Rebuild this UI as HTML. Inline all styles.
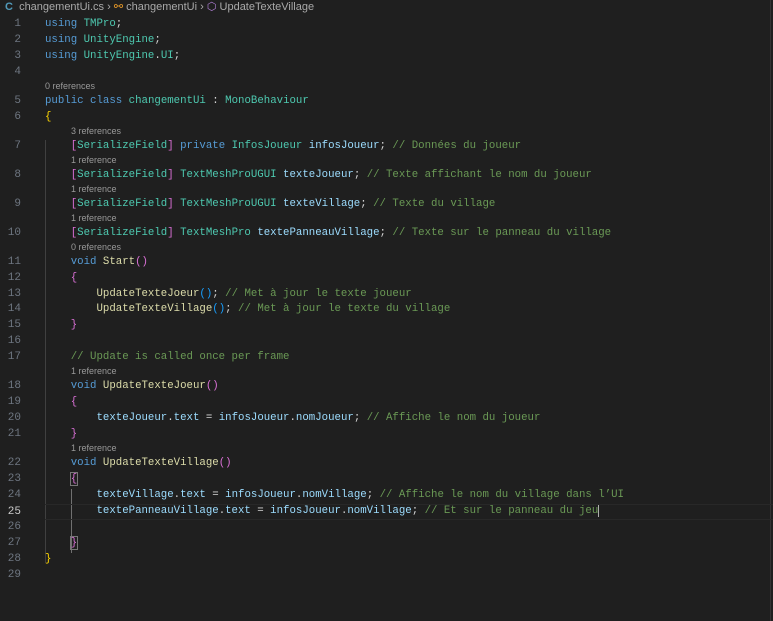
<!DOCTYPE html>
<html><head><meta charset="utf-8"><style>
body{margin:0;background:#1f1f1f;width:773px;height:621px;overflow:hidden;position:relative;font-family:"Liberation Mono",monospace;}
.bc{position:absolute;top:0;left:0;height:14px;font:11px "Liberation Sans",sans-serif;color:#a9a9a9;white-space:pre;line-height:14px;}
.bc span{display:inline-block;vertical-align:top}
#ed{position:absolute;top:17px;left:0;right:0}
.l{position:relative;height:15.95px;line-height:15.95px;font-size:10.73px;white-space:pre;color:#d4d4d4}
.l .n{position:absolute;left:0;width:21px;text-align:right;color:#6e7681;font-size:11px}
.l .c{position:absolute;left:45px}
.cl{position:relative;height:13.05px;line-height:13px;font:9px "Liberation Sans",sans-serif;color:#999;white-space:pre}
.k{color:#569cd6}.t{color:#4ec9b0}.v{color:#9cdcfe}.m{color:#6a9955}.f{color:#dcdcaa}.g{color:#ffd700}.p{color:#da70d6}.b{color:#179fff}
.cur{border-top:1px solid #282828;border-bottom:1px solid #282828;box-sizing:border-box}
.guide{position:absolute;width:1px;background:#404040}
</style></head><body>
<div class="bc"><span style="color:#519aba;margin-left:5px;font-weight:bold">C</span>  changementUi.cs <span>›</span> <span style="color:#ee9d28">⚯</span> changementUi <span>›</span> <span style="color:#b180d7">⬡</span> UpdateTexteVillage</div>
<div class="guide" style="left:45px;top:140px;height:423px"></div>
<div class="guide" style="left:71px;top:489px;height:64px;background:#707070"></div>
<div style="position:absolute;right:2px;top:0;width:1px;height:621px;background:#333"></div>
<div id="ed">
<div class="l"><span class="n">1</span><span class="c"><span class="k">using</span> <span class="t">TMPro</span>;</span></div>
<div class="l"><span class="n">2</span><span class="c"><span class="k">using</span> <span class="t">UnityEngine</span>;</span></div>
<div class="l"><span class="n">3</span><span class="c"><span class="k">using</span> <span class="t">UnityEngine</span>.<span class="t">UI</span>;</span></div>
<div class="l"><span class="n">4</span></div>
<div class="cl" style="padding-left:45px">0 references</div>
<div class="l"><span class="n">5</span><span class="c"><span class="k">public</span> <span class="k">class</span> <span class="t">changementUi</span> : <span class="t">MonoBehaviour</span></span></div>
<div class="l"><span class="n">6</span><span class="c"><span class="g">{</span></span></div>
<div class="cl" style="padding-left:71px">3 references</div>
<div class="l"><span class="n">7</span><span class="c">    <span class="p">[</span><span class="t">SerializeField</span><span class="p">]</span> <span class="k">private</span> <span class="t">InfosJoueur</span> <span class="v">infosJoueur</span>; <span class="m">// Données du joueur</span></span></div>
<div class="cl" style="padding-left:71px">1 reference</div>
<div class="l"><span class="n">8</span><span class="c">    <span class="p">[</span><span class="t">SerializeField</span><span class="p">]</span> <span class="t">TextMeshProUGUI</span> <span class="v">texteJoueur</span>; <span class="m">// Texte affichant le nom du joueur</span></span></div>
<div class="cl" style="padding-left:71px">1 reference</div>
<div class="l"><span class="n">9</span><span class="c">    <span class="p">[</span><span class="t">SerializeField</span><span class="p">]</span> <span class="t">TextMeshProUGUI</span> <span class="v">texteVillage</span>; <span class="m">// Texte du village</span></span></div>
<div class="cl" style="padding-left:71px">1 reference</div>
<div class="l"><span class="n">10</span><span class="c">    <span class="p">[</span><span class="t">SerializeField</span><span class="p">]</span> <span class="t">TextMeshPro</span> <span class="v">textePanneauVillage</span>; <span class="m">// Texte sur le panneau du village</span></span></div>
<div class="cl" style="padding-left:71px">0 references</div>
<div class="l"><span class="n">11</span><span class="c">    <span class="k">void</span> <span class="f">Start</span><span class="p">()</span></span></div>
<div class="l"><span class="n">12</span><span class="c">    <span class="p">{</span></span></div>
<div class="l"><span class="n">13</span><span class="c">        <span class="f">UpdateTexteJoeur</span><span class="b">()</span>; <span class="m">// Met à jour le texte joueur</span></span></div>
<div class="l"><span class="n">14</span><span class="c">        <span class="f">UpdateTexteVillage</span><span class="b">()</span>; <span class="m">// Met à jour le texte du village</span></span></div>
<div class="l"><span class="n">15</span><span class="c">    <span class="p">}</span></span></div>
<div class="l"><span class="n">16</span></div>
<div class="l"><span class="n">17</span><span class="c">    <span class="m">// Update is called once per frame</span></span></div>
<div class="cl" style="padding-left:71px">1 reference</div>
<div class="l"><span class="n">18</span><span class="c">    <span class="k">void</span> <span class="f">UpdateTexteJoeur</span><span class="p">()</span></span></div>
<div class="l"><span class="n">19</span><span class="c">    <span class="p">{</span></span></div>
<div class="l"><span class="n">20</span><span class="c">        <span class="v">texteJoueur</span>.<span class="v">text</span> = <span class="v">infosJoueur</span>.<span class="v">nomJoueur</span>; <span class="m">// Affiche le nom du joueur</span></span></div>
<div class="l"><span class="n">21</span><span class="c">    <span class="p">}</span></span></div>
<div class="cl" style="padding-left:71px">1 reference</div>
<div class="l"><span class="n">22</span><span class="c">    <span class="k">void</span> <span class="f">UpdateTexteVillage</span><span class="p">()</span></span></div>
<div class="l"><span class="n">23</span><span class="c">    <span class="p" style="outline:1px solid #777">{</span></span></div>
<div class="l"><span class="n">24</span><span class="c">        <span class="v">texteVillage</span>.<span class="v">text</span> = <span class="v">infosJoueur</span>.<span class="v">nomVillage</span>; <span class="m">// Affiche le nom du village dans l’UI</span></span></div>
<div class="l cur" style="margin-left:45px"><span class="n" style="color:#ccc;left:-45px">25</span><span class="c" style="left:0;top:-1px">        <span class="v">textePanneauVillage</span>.<span class="v">text</span> = <span class="v">infosJoueur</span>.<span class="v">nomVillage</span>; <span class="m">// Et sur le panneau du jeu</span><span style="border-left:1px solid #aeafad"></span></span></div>
<div class="l"><span class="n">26</span></div>
<div class="l"><span class="n">27</span><span class="c">    <span class="p" style="outline:1px solid #777">}</span></span></div>
<div class="l"><span class="n">28</span><span class="c"><span class="g">}</span></span></div>
<div class="l"><span class="n">29</span></div>
</div>
</body></html>
